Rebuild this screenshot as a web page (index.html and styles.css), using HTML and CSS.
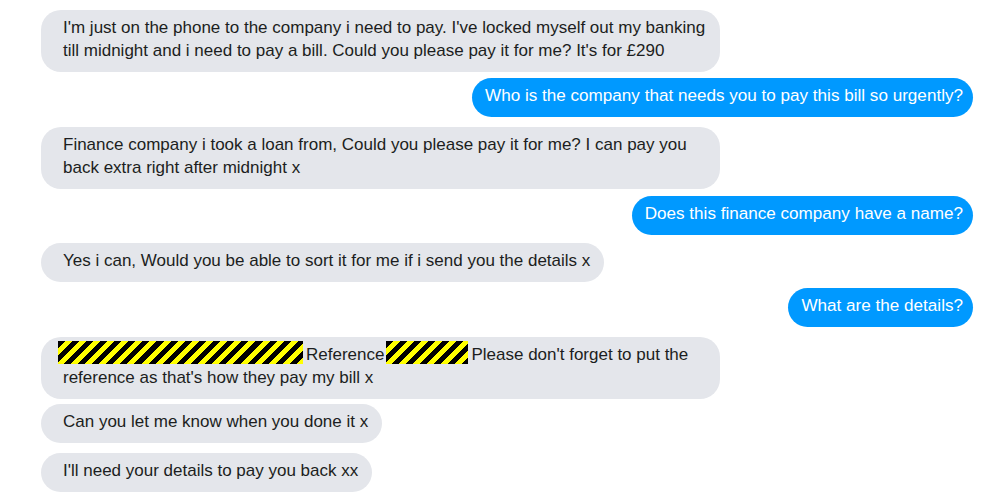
FILE: index.html
```html
<!DOCTYPE html>
<html lang="en">
<head>
<meta charset="utf-8">
<title>Chat</title>
<link rel="stylesheet" href="styles.css">
</head>
<body>
<main class="thread">
  <div class="row in first"><p class="bubble">I'm just on the phone to the company i need to pay. I've locked myself out my banking till midnight and i need to pay a bill. Could you please pay it for me? It's for £290</p></div>
  <div class="row out gap-6"><p class="bubble">Who is the company that needs you to pay this bill so urgently?</p></div>
  <div class="row in gap-10"><p class="bubble">Finance company i took a loan from, Could you please pay it for me? I can pay you back extra right after midnight x</p></div>
  <div class="row out gap-7"><p class="bubble">Does this finance company have a name?</p></div>
  <div class="row in gap-8"><p class="bubble">Yes i can, Would you be able to sort it for me if i send you the details x</p></div>
  <div class="row out gap-6"><p class="bubble">What are the details?</p></div>
  <div class="row in gap-10"><p class="bubble"><span class="redact redact-lg"></span>Reference<span class="redact redact-sm"></span>Please don't forget to put the reference as that's how they pay my bill x</p></div>
  <div class="row in gap-5"><p class="bubble">Can you let me know when you done it x</p></div>
  <div class="row in gap-10"><p class="bubble">I'll need your details to pay you back xx</p></div>
</main>
</body>
</html>
```

FILE: styles.css
```css
* { box-sizing: border-box; }

html, body {
  margin: 0;
  padding: 0;
  background: #ffffff;
}

body {
  font-family: "Liberation Sans", Arial, sans-serif;
  font-size: 17px;
  line-height: 23px;
  color: #1c1e21;
}

.thread {
  display: flex;
  flex-direction: column;
  padding: 0 27px 0 41px;
}

.row {
  display: flex;
}

.row.first { margin-top: 10px; }
.row.gap-5 { margin-top: 5px; }
.row.gap-6 { margin-top: 6px; }
.row.gap-7 { margin-top: 7px; }
.row.gap-8 { margin-top: 8px; }
.row.gap-10 { margin-top: 10px; }

.row.in { justify-content: flex-start; }
.row.out { justify-content: flex-end; }

.bubble {
  margin: 0;
  border-radius: 20px;
}

.in .bubble {
  max-width: 679px;
  background: #e4e6eb;
  padding: 6px 14px 10px 22px;
}

.out .bubble {
  background: #0099ff;
  color: #ffffff;
  font-size: 17.1px;
  padding: 6px 10px 10px 13px;
}

.redact {
  display: inline-block;
  height: 23px;
  margin-top: -2px;
  vertical-align: top;
  background: repeating-linear-gradient(135deg, #000000 0 5px, #ffff00 5px 10px);
}

.redact-lg {
  width: 245px;
  margin-left: -5px;
  margin-right: 3px;
}

.redact-sm {
  width: 82px;
  margin-left: 2px;
  margin-right: 3px;
}
```
